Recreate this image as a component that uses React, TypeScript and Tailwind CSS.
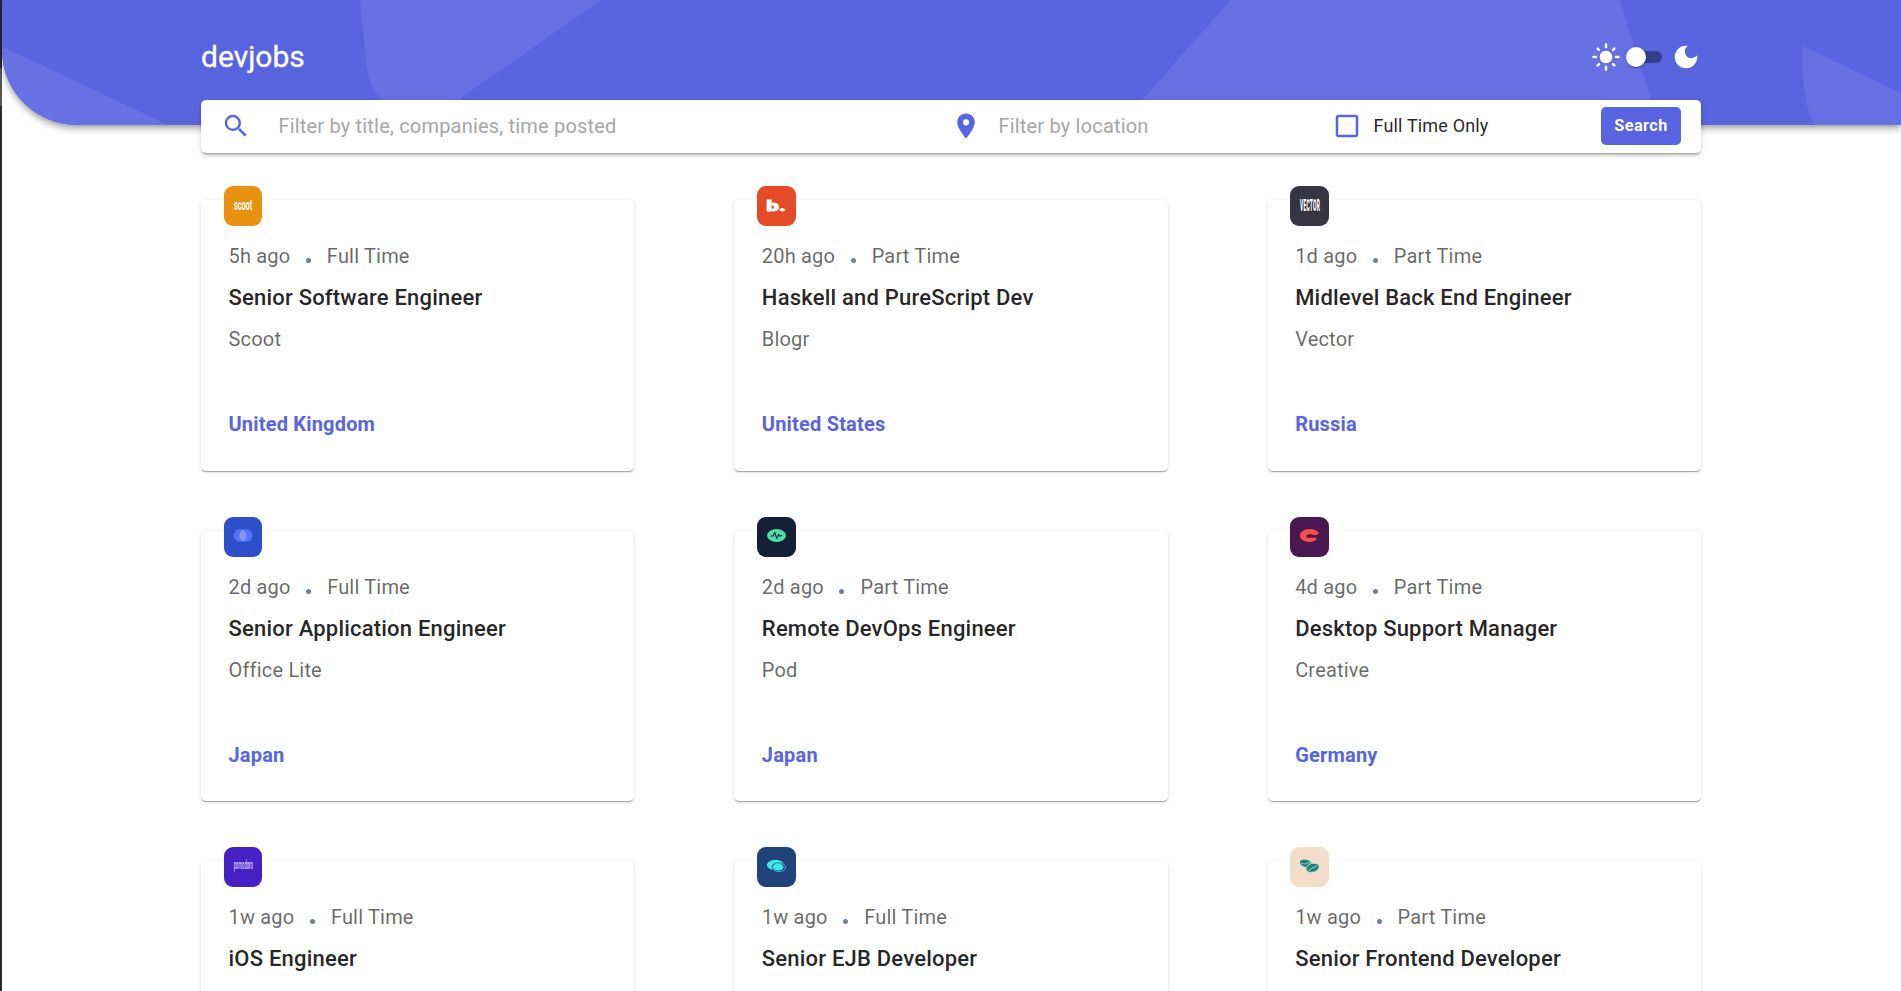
import type { ReactNode } from "react";
import {
  MdCheckBoxOutlineBlank,
  MdDarkMode,
  MdLightMode,
  MdLocationOn,
  MdSearch,
} from "react-icons/md";

type Job = {
  posted: string;
  contract: string;
  title: string;
  company?: string;
  country?: string;
  tile: string;
  mark: ReactNode;
};

const font = "font-[Roboto,'Liberation_Sans',sans-serif]";

const jobs: Job[] = [
  {
    posted: "5h ago",
    contract: "Full Time",
    title: "Senior Software Engineer",
    company: "Scoot",
    country: "United Kingdom",
    tile: "bg-[#E99210]",
    mark: (
      <text transform="translate(10 24.4) scale(0.52 1)" fontSize="14" fontWeight="700" fill="#fff">
        scoot
      </text>
    ),
  },
  {
    posted: "20h ago",
    contract: "Part Time",
    title: "Haskell and PureScript Dev",
    company: "Blogr",
    country: "United States",
    tile: "bg-[#E64B27]",
    mark: (
      <text transform="translate(9.3 25) scale(1.45 1)" fontSize="15.5" fontWeight="900" fill="#fff" stroke="#fff" strokeWidth="0.8">
        b.
      </text>
    ),
  },
  {
    posted: "1d ago",
    contract: "Part Time",
    title: "Midlevel Back End Engineer",
    company: "Vector",
    country: "Russia",
    tile: "bg-[#363544]",
    mark: (
      <text transform="translate(10 25) scale(0.305 1)" fontSize="16" fontWeight="900" letterSpacing="0.8" fill="#fff">
        VECTOR
      </text>
    ),
  },
  {
    posted: "2d ago",
    contract: "Full Time",
    title: "Senior Application Engineer",
    company: "Office Lite",
    country: "Japan",
    tile: "bg-[#2E4FC9]",
    mark: (
      <>
        <circle cx="16.2" cy="18.4" r="6.4" fill="#5475FA" />
        <circle cx="21.9" cy="18.4" r="6.4" fill="#5475FA" />
        <path d="M19.05 12.7a6.4 6.4 0 0 1 0 11.4a6.4 6.4 0 0 1 0-11.4z" fill="#8199FC" />
      </>
    ),
  },
  {
    posted: "2d ago",
    contract: "Part Time",
    title: "Remote DevOps Engineer",
    company: "Pod",
    country: "Japan",
    tile: "bg-[#132036]",
    mark: (
      <>
        <ellipse cx="19.5" cy="18.5" rx="9.5" ry="6.5" fill="#4DE0A4" />
        <path d="M13.8 19h2.2l1.8-3.6 2 6.2 1.8-4.2 1.4 1.8 2.2-.9" fill="none" stroke="#132036" strokeWidth="1.1" strokeLinejoin="round" />
      </>
    ),
  },
  {
    posted: "4d ago",
    contract: "Part Time",
    title: "Desktop Support Manager",
    company: "Creative",
    country: "Germany",
    tile: "bg-[#4A1850]",
    mark: (
      <path
        d="M28.9 15.8C27.4 13.4 23.9 12 19.7 12C14.3 12 10 14.9 10 18.5S14.3 25 19.7 25C22.6 25 25.3 24.2 26.9 22.6L25 20.5C22.5 20.8 20.2 20.8 17 20.8C15.6 20.2 16.2 18.2 18 17.5C20 16.9 22.3 17.2 23.6 18.2L28 17.6z"
        fill="#FF4C4C"
      />
    ),
  },
  {
    posted: "1w ago",
    contract: "Full Time",
    title: "iOS Engineer",
    tile: "bg-[#4721C6]",
    mark: (
      <text transform="translate(9.8 22) scale(0.33 1)" fontSize="12.5" fontWeight="500" fill="#DAD3F8">
        pomodoro
      </text>
    ),
  },
  {
    posted: "1w ago",
    contract: "Full Time",
    title: "Senior EJB Developer",
    tile: "bg-[#22427C]",
    mark: (
      <>
        <ellipse cx="18.5" cy="18" rx="8.6" ry="5.2" fill="#3EE9E5" />
        <ellipse cx="22" cy="20.4" rx="7.4" ry="5" fill="#22427C" />
        <ellipse cx="22" cy="20.4" rx="6.6" ry="4.2" fill="none" stroke="#3EE9E5" strokeWidth="0.7" />
        <ellipse cx="21.2" cy="20.1" rx="5.4" ry="3.5" fill="#3EE9E5" />
      </>
    ),
  },
  {
    posted: "1w ago",
    contract: "Part Time",
    title: "Senior Frontend Developer",
    tile: "bg-[#F2DCCA]",
    mark: (
      <>
        <ellipse cx="15.8" cy="16.3" rx="6" ry="3.7" transform="rotate(14 15.8 16.3)" fill="#16857F" />
        <path d="M11 16.6c2.4-.2 3 .6 4.600.2s2.800-1.600 4.800-1.200" fill="none" stroke="#F2DCCA" strokeWidth="0.7" />
        <ellipse cx="22.6" cy="20.8" rx="6.8" ry="4.4" transform="rotate(-14 22.6 20.8)" fill="#16857F" stroke="#F2DCCA" strokeWidth="0.8" />
        <path d="M18.5 23.4c2.4-.6 2.6-1.9 4.3-2.6s2.9-.8 4.2-2.600" fill="none" stroke="#F2DCCA" strokeWidth="0.8" />
      </>
    ),
  },
];

function HeaderPattern() {
  return (
    <svg className="absolute inset-0 size-full" viewBox="0 0 1899 125" preserveAspectRatio="none" fill="#6871E3" aria-hidden="true">
      <path d="M0 46.5L166 125H0z" />
      <path d="M358 0H599L456 100L420 125H400Q384 112 379 100Q368 86 365 70z" />
      <path d="M1228.500 0H1617.700L1657 125H1118.500z" />
      <path d="M1800.500 46L1899 93V125H1811.500Q1800.500 95 1800.500 68z" />
    </svg>
  );
}

function ThemeSwitch() {
  return (
    <div className="flex items-center text-white">
      <MdLightMode className="size-[30px]" />
      <div className="flex h-[30px] w-[50px] items-center px-[5px]">
        <div className="z-10 size-5 rounded-full bg-white shadow-[0_2px_1px_-1px_rgba(0,0,0,0.2),0_1px_1px_rgba(0,0,0,0.14),0_1px_4px_rgba(0,0,0,0.12)]" />
        <div className="-ml-4 h-[12.5px] w-[32px] rounded-full bg-[#373E8B]" />
      </div>
      <MdDarkMode className="size-[30px]" />
    </div>
  );
}

function SearchBar() {
  return (
    <div className="relative -mt-[25px] ml-[199px] flex h-[53px] w-[1500px] items-center rounded-[5px] bg-white pr-5 pl-5 shadow-[0_3px_1px_-2px_rgba(0,0,0,0.2),0_2.5px_2.5px_rgba(0,0,0,0.14),0_1px_6px_rgba(0,0,0,0.12)]">
      <MdSearch className="mb-px size-[30px] text-[#5964E0]" />
      <span className="mb-0.5 ml-[27.5px] w-[672px] text-xl tracking-[0.00938em] text-[#A6A6A6]">
        Filter by title, companies, time posted
      </span>
      <MdLocationOn className="mb-px size-[30px] text-[#5964E0]" />
      <span className="mb-0.5 ml-[18px] w-[333px] text-xl tracking-[0.00938em] text-[#A6A6A6]">
        Filter by location
      </span>
      <MdCheckBoxOutlineBlank className="mb-px size-[30px] text-[#5964E0]" />
      <span className="mb-0.5 ml-3 text-lg tracking-[0.00938em] text-black/87">Full Time Only</span>
      <button className="mb-px ml-auto h-[38px] w-20 rounded-[5px] bg-[#5964E0] text-[16.25px] font-bold tracking-[0.02857em] text-white">
        Search
      </button>
    </div>
  );
}

function JobCard({ job }: { job: Job }) {
  return (
    <article className="relative h-[270.5px] rounded-[5px] bg-white px-[27.5px] pt-[41px] shadow-[0_2px_1px_-1px_rgba(0,0,0,0.2),0_1px_1px_rgba(0,0,0,0.14),0_1px_4px_rgba(0,0,0,0.12)]">
      <div className={`absolute -top-3.5 left-[22.5px] h-10 w-[38.75px] rounded-[9px] ${job.tile}`}>
        <svg className="size-full" viewBox="0 0 38.75 40" aria-hidden="true">
          {job.mark}
        </svg>
      </div>
      <p className="flex text-xl leading-[30px] tracking-[0.00938em] text-black/60">
        {job.posted}
        <span className="mt-[17px] mr-4 ml-[15.5px] size-[5px] rounded-full bg-[#6E8098]" />
        {job.contract}
      </p>
      <h2 className="mt-[9px] text-[22px] leading-[35px] font-medium tracking-[0.0094em] text-black/87">{job.title}</h2>
      {job.company && (
        <p className="mt-[9px] text-xl leading-[30px] tracking-[0.00938em] text-black/60">{job.company}</p>
      )}
      {job.country && (
        <p className="mt-[55px] text-xl leading-[30px] font-bold tracking-[0.00938em] text-[#5964E0]">{job.country}</p>
      )}
    </article>
  );
}

export default function App() {
  return (
    <div className={`flex h-[991px] overflow-hidden bg-white ${font}`}>
      <div className="flex w-0.5 flex-col bg-[#2B2B2F]">
        <div className="mt-[68px] h-[38px] bg-[#57575B]" />
      </div>
      <div className="flex-1">
        <header className="relative h-[125px] rounded-bl-[75px] bg-[#5964E0] shadow-[0_2.5px_5px_-1px_rgba(0,0,0,0.2),0_5px_6px_rgba(0,0,0,0.14),0_1px_12px_rgba(0,0,0,0.12)]">
          <div className="absolute inset-0 overflow-hidden rounded-bl-[75px]">
            <HeaderPattern />
          </div>
          <div className="relative ml-[199px] flex h-[114px] w-[1500px] items-center justify-between">
            <h1 className="text-3xl text-white [-webkit-text-stroke:0.3px_white]">devjobs</h1>
            <ThemeSwitch />
          </div>
        </header>
        <SearchBar />
        <main className="mt-[47px] ml-[199px] grid w-[1500px] grid-cols-3 gap-x-[100px] gap-y-[60px]">
          {jobs.map((job) => (
            <JobCard key={job.title} job={job} />
          ))}
        </main>
      </div>
    </div>
  );
}
